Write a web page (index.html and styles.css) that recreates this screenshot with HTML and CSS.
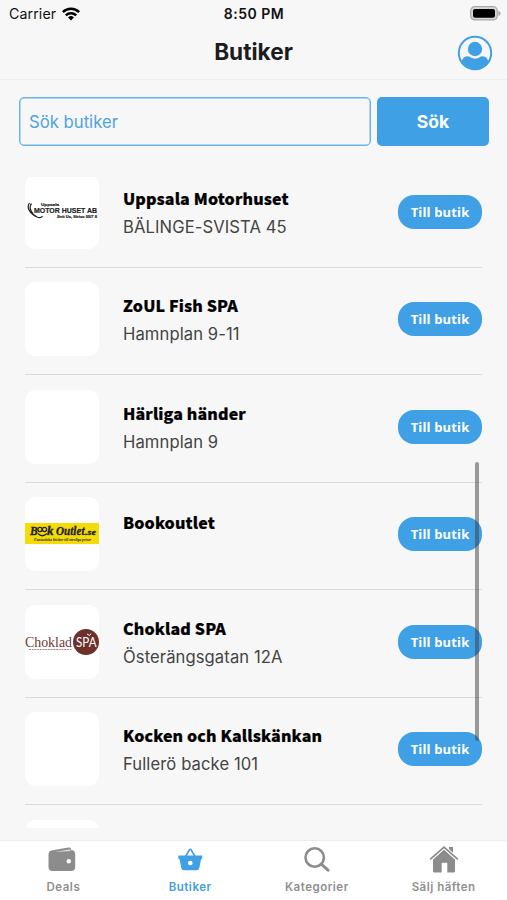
FILE: index.html
```html
<!DOCTYPE html>
<html lang="sv">
<head>
<meta charset="utf-8">
<title>Butiker</title>
<link rel="stylesheet" href="styles.css">
</head>
<body>
<div class="status">
  <div class="carrier"><span>Carrier</span>
    <svg width="18" height="14" viewBox="0 0 18 14" fill="none" stroke="#000" stroke-width="2.5"><path d="M.9 5.1a11.5 11.5 0 0 1 16.2 0M3.8 8.300a7.400 7.400 0 0 1 10.400 0"/><path d="M9 13.400 6.100 10.400a4.200 4.200 0 0 1 5.800 0z" fill="#000" stroke="none"/></svg>
  </div>
  <div class="clock">8:50 PM</div>
  <svg class="battery" width="31" height="15" viewBox="0 0 31 15"><rect x=".7" y=".7" width="26.6" height="13.2" rx="4" fill="#d8d8d8" stroke="#a9a9a9" stroke-width="1.2"/><rect x="3" y="2.9" width="22" height="8.8" rx="2" fill="#000"/><path d="M28.4 4.8q2.2.8 2.2 2.6t-2.2 2.6z" fill="#a9a9a9"/></svg>
</div>
<header class="header">
  <h1>Butiker</h1>
  <svg class="profile" width="36" height="36" viewBox="0 0 36 36"><defs><clipPath id="face"><circle cx="18" cy="18" r="16.5"/></clipPath></defs><circle cx="18" cy="18" r="16.2" fill="none" stroke="#40a0e6" stroke-width="2"/><path clip-path="url(#face)" d="M4 28q1.500-6.500 6.500-6.700 2 0 3.100 1.200 4.400 2.300 8.800 0 1.100-1.200 3.100-1.200 5 .2 6.500 6.700v8H4z" fill="#40a0e6"/><circle cx="18" cy="14" r="7.200" fill="#40a0e6"/></svg>
</header>
<div class="search">
  <div class="field">Sök butiker</div>
  <div class="go">Sök</div>
</div>
<main class="viewport">
  <ul class="list">
    <li class="shop"><div class="logo">
      <svg viewBox="0 0 74 74"><path d="M4.500 28C1 32.500 5 38.500 12 42q4 1.500 5.500-1M6.500 28.500Q3 32.500 8 38.500" fill="none" stroke="#222" stroke-width="1.200"/><g fill="#222" stroke="#222" stroke-width=".2" font-family="Liberation Sans" font-weight="700"><text x="16" y="31" font-size="4.200" textLength="18" lengthAdjust="spacingAndGlyphs">Uppsala</text><text x="9" y="38.200" font-size="7" textLength="63" lengthAdjust="spacingAndGlyphs">MOTOR HUSET AB</text><text x="32" y="43.400" font-size="4" textLength="40" lengthAdjust="spacingAndGlyphs">Snit Us, Sirius 05/7 8</text></g></svg></div>
      <div class="info"><h2>Uppsala Motorhuset</h2><p>BÄLINGE-SVISTA 45</p></div><div class="visit">Till butik</div></li>
    <li class="shop"><div class="logo"></div><div class="info"><h2>ZoUL Fish SPA</h2><p>Hamnplan 9-11</p></div><div class="visit">Till butik</div></li>
    <li class="shop"><div class="logo"></div><div class="info"><h2>Härliga händer</h2><p>Hamnplan 9</p></div><div class="visit">Till butik</div></li>
    <li class="shop"><div class="logo">
      <svg viewBox="0 0 74 74"><path d="M0 26h74v21H0z" fill="#f5dc09"/><g fill="#222" stroke="#222" stroke-width=".3" font-family="Liberation Serif" font-style="italic" font-weight="700"><text x="5" y="38.400" font-size="11.500">B</text><text x="22" y="38.400" font-size="11.500" textLength="6.500" lengthAdjust="spacingAndGlyphs">k</text><text x="31" y="38.400" font-size="12" textLength="28.500" lengthAdjust="spacingAndGlyphs">Outlet</text><text x="60" y="38.400" font-size="8" textLength="11" lengthAdjust="spacingAndGlyphs">.se</text><text x="9" y="43.800" font-size="3.800" stroke-width="0" textLength="57" lengthAdjust="spacingAndGlyphs">Fantastiska böcker till otroliga priser</text></g><g fill="none" stroke="#222" stroke-width="1.300"><circle cx="15" cy="32.500" r="2.100"/><circle cx="19.500" cy="32.500" r="2.100"/><path d="M13 36.500q4 4.500 9 0"/></g></svg></div>
      <div class="info name-only"><h2>Bookoutlet</h2></div><div class="visit">Till butik</div></li>
    <li class="shop"><div class="logo">
      <svg viewBox="0 0 74 74"><text x="0" y="42" font-family="Liberation Serif" font-size="14.500" fill="#6c3832" textLength="47" lengthAdjust="spacingAndGlyphs">Choklad</text><path d="M4 44.500h43" stroke="#a98b86" stroke-dasharray="2 .7" fill="none"/><circle cx="61" cy="37" r="13" fill="#6d302b"/><text x="51" y="42" font-family="Lato" font-size="12.500" fill="#fff" textLength="20.500" lengthAdjust="spacingAndGlyphs">SPA</text><path d="m62 29 2.500 1.500 1.500-2" stroke="#fff" fill="none"/></svg></div>
      <div class="info"><h2>Choklad SPA</h2><p>Österängsgatan 12A</p></div><div class="visit">Till butik</div></li>
    <li class="shop"><div class="logo"></div><div class="info"><h2>Kocken och Kallskänkan</h2><p>Fullerö backe 101</p></div><div class="visit">Till butik</div></li>
    <li class="shop"><div class="logo"></div></li>
  </ul>
  <div class="scrollbar"></div>
</main>
<nav class="tabs">
  <div class="tab"><svg width="30" height="30" viewBox="0 0 30 30"><path d="M.5 9.500q0-4 4-4.300l16-2.800q2.500-.3 2.800 2.600 3.900.3 3.900 4.200V22q0 4-4 4H4.500q-4 0-4-4z" fill="#8c8c8c"/><path d="m8 6.700 13-2.100q1.600-.2 1.800 1.300L8 7z" fill="#ddd"/><circle cx="20.800" cy="16.200" r="2.200" fill="#fff"/></svg><span>Deals</span></div>
  <div class="tab active"><svg width="30" height="30" viewBox="0 0 30 30"><path d="M3.300 10.500h24V13q0 1-1.200 1.200L24.300 23q-.4 2.300-2.500 2.300h-13q-2.100 0-2.500-2.300L4.500 14.200Q3.300 14 3.300 13z" fill="#40a0e6"/><path d="m10.300 12 4.100-7.100q.9-1.300 1.800 0L20.300 12" fill="none" stroke="#40a0e6" stroke-width="1.700"/><circle cx="15.300" cy="18" r="2.300" fill="#fff"/></svg><span>Butiker</span></div>
  <div class="tab"><svg width="30" height="30" viewBox="0 0 30 30" fill="none" stroke="#8c8c8c"><circle cx="12.700" cy="12.500" r="9.200" stroke-width="2.600"/><path d="m19.800 19.500 6.200 5.700" stroke-width="3" stroke-linecap="round"/></svg><span>Kategorier</span></div>
  <div class="tab"><svg width="30" height="30" viewBox="0 0 30 30"><path d="M15 4.500 26 14.500V26.500q0 1-1 1h-6.700V17.800h-5.600v9.700H5q-1 0-1-1V14.500z" fill="#8c8c8c"/><path d="M20 2h4V12l-4-4z" fill="#8c8c8c"/><path d="M1.200 14.400 15 2.100l13.800 12.300" fill="none" stroke="#fff" stroke-width="3.600"/><path d="M1.200 14.400 15 2.100l13.800 12.300" fill="none" stroke="#8c8c8c" stroke-width="1.800"/></svg><span>Sälj häften</span></div>
</nav>
</body>
</html>
```
FILE: styles.css
```css
* { box-sizing: border-box; }
body {
  margin: 0;
  height: 900px;
  display: flex;
  flex-direction: column;
  overflow: hidden;
  background: #f7f7f7;
  font-family: Inter, "Liberation Sans", sans-serif;
  color: #1c1c1e;
}
h1, h2, p, ul { margin: 0; padding: 0; }
svg { display: block; }
.status {
  height: 27px;
  padding: 0 6px 0 9px;
  display: grid;
  grid-template-columns: 1fr auto 1fr;
  align-items: center;
  font-size: 14.2px;
  color: #111;
}
.carrier { display: flex; align-items: center; gap: 6px; letter-spacing: .1px; }
.clock {
  margin-right: 2px;
  font-weight: 600;
  font-size: 14px;
  letter-spacing: .5px;
}
.battery { justify-self: end; }
.header {
  height: 53px;
  padding: 0 14px;
  display: grid;
  grid-template-columns: 36px 1fr 36px;
  align-items: center;
  border-bottom: 1px solid #eeeeee;
}
.header h1 {
  grid-column: 2;
  padding-bottom: 2px;
  text-align: center;
  font-size: 22.6px;
  line-height: 28px;
  font-weight: 700;
}
.search {
  height: 97px;
  padding: 17px 18px 0 19px;
  display: flex;
  gap: 6px;
}
.field {
  width: 352px;
  height: 49px;
  padding-left: 9px;
  border: 1.5px solid #6db4e8;
  box-shadow: inset 0 0 0 .5px #6db4e8;
  border-radius: 5px;
  font-size: 16.7px;
  line-height: 48px;
  color: #4fa3dd;
}
.go {
  flex: 1;
  height: 49px;
  border-radius: 5px;
  background: #40a0e6;
  color: #fff;
  font-size: 17.500px;
  font-weight: 700;
  line-height: 50px;
  text-align: center;
}
.viewport {
  position: relative;
  height: 651px;
  padding: 0 25px;
  overflow: hidden;
}
.list { list-style: none; margin-top: -16.700px; }
.shop {
  height: 107.500px;
  padding-bottom: 3.500px;
  display: flex;
  align-items: center;
  border-bottom: 1px solid #dadada;
}
.logo {
  width: 74px;
  height: 74px;
  flex: none;
  border-radius: 10px;
  background: #fff;
  overflow: hidden;
}
.info { flex: 1; padding-left: 24px; }
.name-only { padding-bottom: 24px; }
.info h2 {
  font-family: "Noto Sans CJK SC", sans-serif;
  font-size: 16px;
  line-height: 26px;
  font-weight: 900;
  letter-spacing: .13px;
  -webkit-text-stroke: .2px #000;
  color: #000;
  white-space: nowrap;
}
.info p {
  height: 28px;
  font-size: 16.600px;
  line-height: 32px;
  letter-spacing: .1px;
  color: #444;
  white-space: nowrap;
}
.visit {
  width: 84px;
  height: 34px;
  border-radius: 16px;
  background: #40a0e6;
  color: #fff;
  font-family: "Open Sans", sans-serif;
  font-size: 13px;
  font-weight: 700;
  letter-spacing: .15px;
  line-height: 34px;
  text-align: center;
}
.scrollbar {
  position: absolute;
  top: 285px;
  left: 475px;
  width: 4px;
  height: 279px;
  border-radius: 2px;
  background: rgba(60, 60, 60, .5);
}
.tabs {
  margin-top: 12px;
  height: 60px;
  flex: none;
  display: grid;
  grid-template-columns: repeat(4, 1fr);
  border-top: 1px solid #ececec;
  background: #fff;
}
.tab {
  display: flex;
  flex-direction: column;
  align-items: center;
  padding-top: 4px;
  gap: 5px;
  color: #8f8f8f;
  font-size: 11.500px;
  line-height: 15px;
  font-weight: 600;
  letter-spacing: .5px;
}
.active { color: #40a0e6; }
```
